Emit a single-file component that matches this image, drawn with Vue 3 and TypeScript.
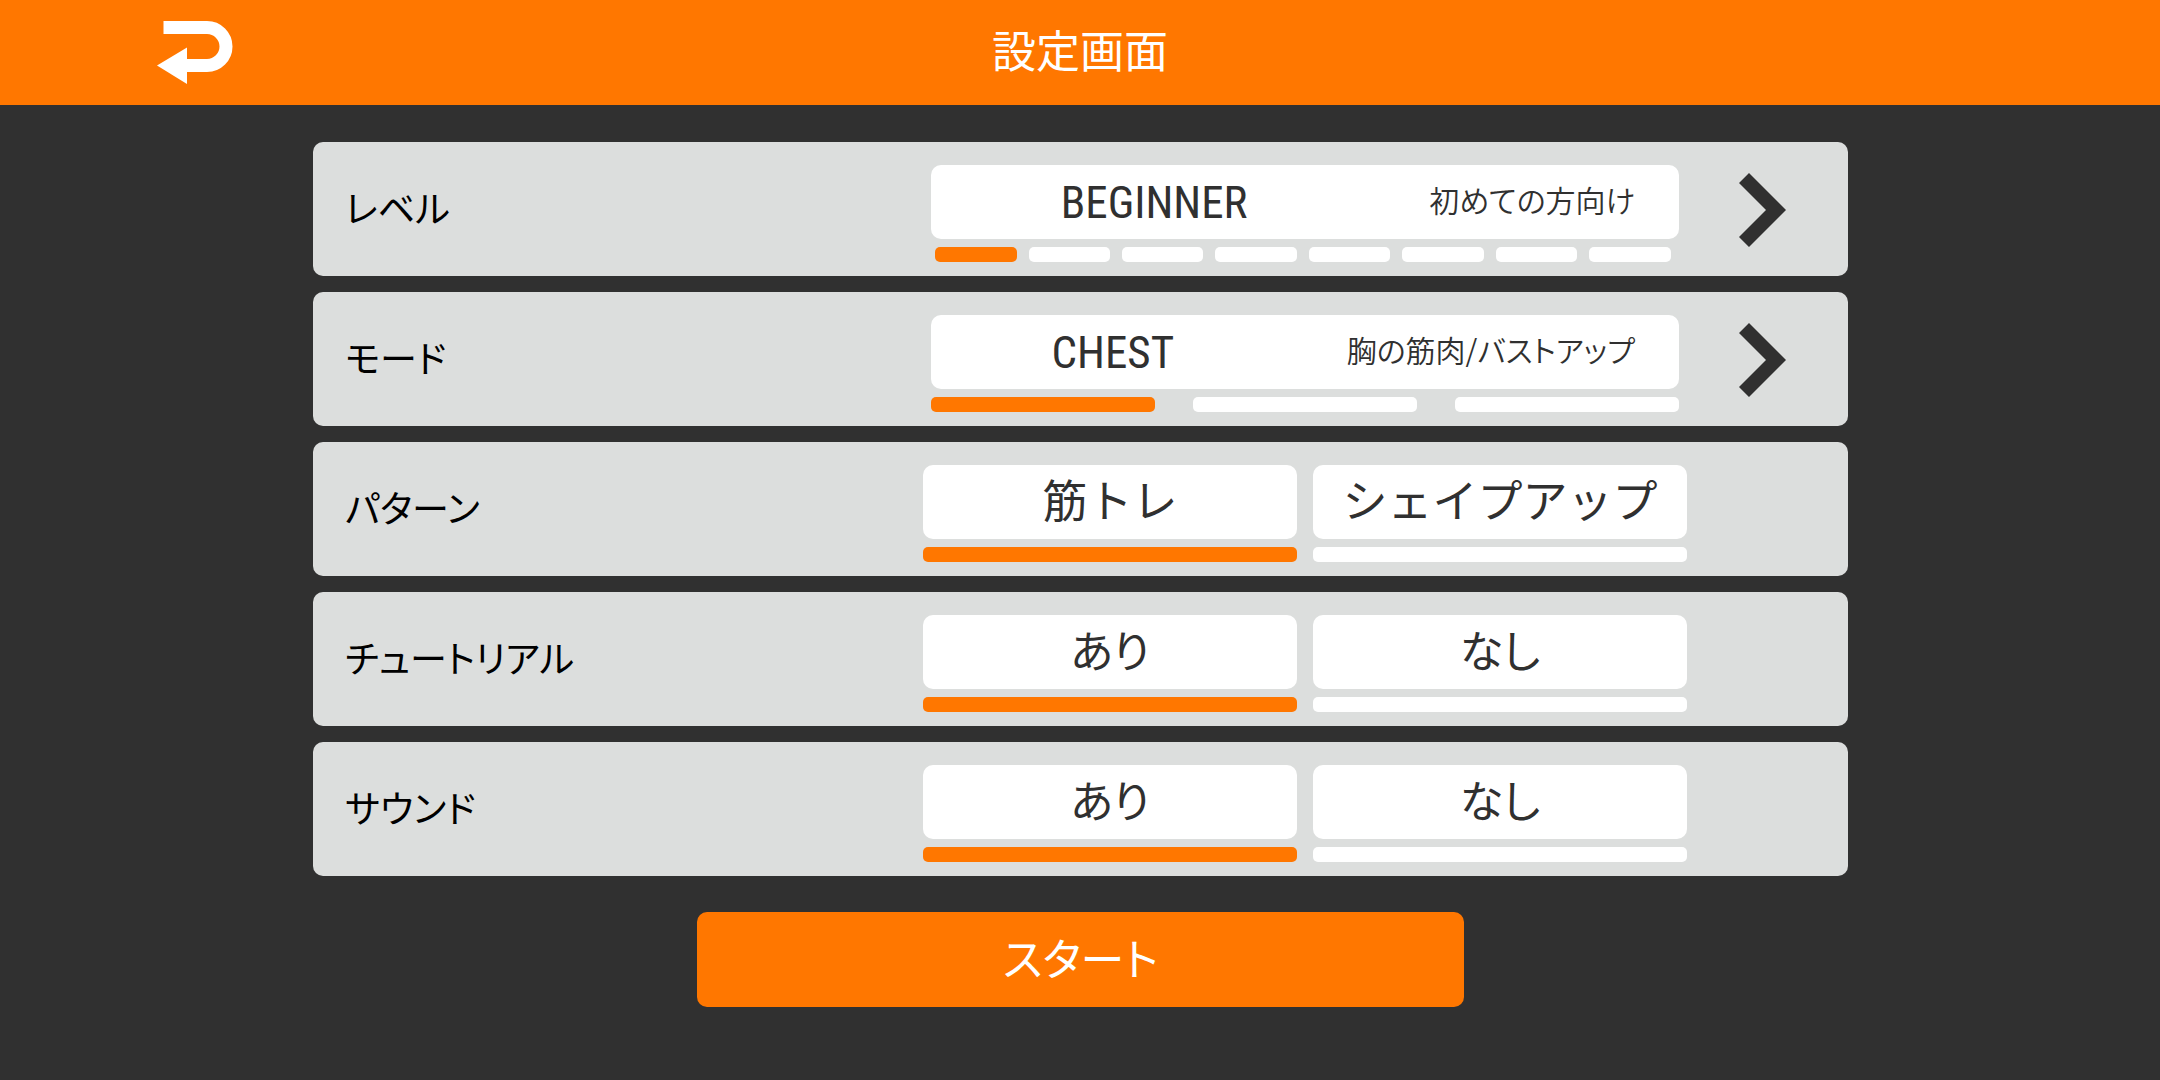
<script setup lang="ts">
import { reactive } from 'vue'

interface Choice {
  value: string
  note: string
}

interface Picker {
  id: string
  label: string
  tight: boolean
  choices: Choice[]
  index: number
}

interface Toggle {
  id: string
  label: string
  compact: boolean
  options: string[]
  selected: string
}

const pickers = reactive<Picker[]>([
  {
    id: 'level',
    label: 'レベル',
    tight: true,
    choices: Array.from({ length: 8 }, () => ({ value: 'BEGINNER', note: '初めての方向け' })),
    index: 0,
  },
  {
    id: 'mode',
    label: 'モード',
    tight: false,
    choices: Array.from({ length: 3 }, () => ({ value: 'CHEST', note: '胸の筋肉/バストアップ' })),
    index: 0,
  },
])

const toggles = reactive<Toggle[]>([
  { id: 'pattern', label: 'パターン', compact: false, options: ['筋トレ', 'シェイプアップ'], selected: '筋トレ' },
  { id: 'tutorial', label: 'チュートリアル', compact: true, options: ['あり', 'なし'], selected: 'あり' },
  { id: 'sound', label: 'サウンド', compact: true, options: ['あり', 'なし'], selected: 'あり' },
])

function next(picker: Picker) {
  picker.index = (picker.index + 1) % picker.choices.length
}
</script>

<template>
  <div class="screen">
    <header class="bar">
      <button class="back" type="button" aria-label="戻る">
        <svg width="76" height="64" viewBox="0 0 76 64" aria-hidden="true">
          <path d="M6.500 7.500H50a19 19 0 0 1 0 38H28" fill="none" stroke="#fff" stroke-width="13" />
          <path d="M0 45.500 30 27.500V64Z" fill="#fff" />
        </svg>
      </button>
      <h1 class="title">設定画面</h1>
    </header>

    <form class="settings" @submit.prevent>
      <div v-for="picker in pickers" :key="picker.id" class="row">
        <span :id="picker.id" class="label">{{ picker.label }}</span>
        <div class="control picker" :aria-labelledby="picker.id" role="group">
          <div class="box current">
            <span class="value">{{ picker.choices[picker.index].value }}</span>
            <span class="note">{{ picker.choices[picker.index].note }}</span>
          </div>
          <div class="steps" :class="{ tight: picker.tight }">
            <span
              v-for="(choice, i) in picker.choices"
              :key="i"
              class="mark"
              :class="{ on: i === picker.index }"
            ></span>
          </div>
        </div>
        <button class="next" type="button" aria-label="次へ" @click="next(picker)">
          <svg width="47" height="74" viewBox="0 0 47 74" aria-hidden="true">
            <path d="M10 0 47 37 10 74 0 64 27 37 0 10Z" fill="#303030" />
          </svg>
        </button>
      </div>

      <div v-for="toggle in toggles" :key="toggle.id" class="row">
        <span :id="toggle.id" class="label">{{ toggle.label }}</span>
        <div
          class="control options"
          :class="{ compact: toggle.compact }"
          :aria-labelledby="toggle.id"
          role="radiogroup"
        >
          <label v-for="option in toggle.options" :key="option" class="option">
            <input v-model="toggle.selected" class="radio" type="radio" :name="toggle.id" :value="option" />
            <span class="box">{{ option }}</span>
            <span class="mark" :class="{ on: toggle.selected === option }"></span>
          </label>
        </div>
      </div>

      <button class="start" type="submit">スタート</button>
    </form>
  </div>
</template>

<style>
body {
  background: #303030;
}
</style>

<style scoped>
.screen {
  min-height: 100vh;
  background: #303030;
  color: #303030;
  font-family: "Noto Sans CJK JP", sans-serif;
  font-weight: 400;
}

button {
  border: 0;
  padding: 0;
  background: none;
  font-family: inherit;
  font-weight: inherit;
  cursor: pointer;
}

svg {
  display: block;
}

.bar {
  display: grid;
  grid-template-columns: 1fr auto 1fr;
  align-items: center;
  height: 105px;
  padding: 0 157px 2px;
  background: #ff7700;
  box-sizing: border-box;
}

.back {
  justify-self: start;
}

.title {
  margin: 0;
  padding-bottom: 6px;
  color: #fff;
  font-size: 44px;
  font-weight: inherit;
  line-height: 64px;
}

.settings {
  display: flex;
  flex-direction: column;
  align-items: center;
  gap: 16px;
  width: 71.1%;
  margin: 0 auto;
  padding: 37px 0 37px 1px;
  box-sizing: border-box;
}

.row {
  display: grid;
  grid-template-columns: 610fr 764fr 161fr;
  width: 100%;
  height: 134px;
  border-radius: 10px;
  background: #dcdedd;
}

.label {
  align-self: center;
  padding: 0 0 4px 32px;
  color: #000;
  font-size: 37px;
  line-height: 52px;
  font-feature-settings: "palt";
}

.control {
  padding-top: 23px;
}

.picker {
  display: flex;
  flex-direction: column;
  gap: 8px;
  margin: 0 8px;
}

.box {
  display: flex;
  align-items: center;
  justify-content: center;
  height: 74px;
  padding-bottom: 6px;
  border-radius: 10px;
  background: #fff;
  font-size: 45px;
  line-height: 64px;
  box-sizing: border-box;
}

.compact .box {
  font-size: 44px;
  font-feature-settings: "palt";
}

.value {
  flex: 1;
  padding-top: 8px;
  font-family: "Roboto Condensed", "Liberation Sans Narrow", Roboto, sans-serif;
  font-size: 45px;
  text-align: center;
}

.note {
  padding: 0 44px 0 52px;
  font-size: 30px;
  font-weight: 350;
  font-feature-settings: "palt";
}

.steps {
  display: flex;
  gap: 38px;
}

.steps.tight {
  gap: 12px;
  padding: 0 8px 0 4px;
}

.mark {
  flex: 1;
  height: 15px;
  border-radius: 5px;
  background: #fff;
}

.mark.on {
  background: #ff7700;
}

.options {
  display: grid;
  grid-template-columns: 1fr 1fr;
  gap: 16px;
}

.option {
  position: relative;
  display: flex;
  flex-direction: column;
  gap: 8px;
  cursor: pointer;
}

.option .mark {
  flex: none;
}

.radio {
  position: absolute;
  inset: 0;
  width: 100%;
  height: 100%;
  margin: 0;
  opacity: 0;
}

.next {
  display: flex;
  align-items: center;
  padding: 2px 0 0 52px;
}

.start {
  width: 50%;
  height: 95px;
  margin-top: 20px;
  padding-bottom: 6px;
  border-radius: 10px;
  background: #ff7700;
  color: #fff;
  font-size: 44px;
  line-height: 64px;
  font-feature-settings: "palt";
}
</style>
